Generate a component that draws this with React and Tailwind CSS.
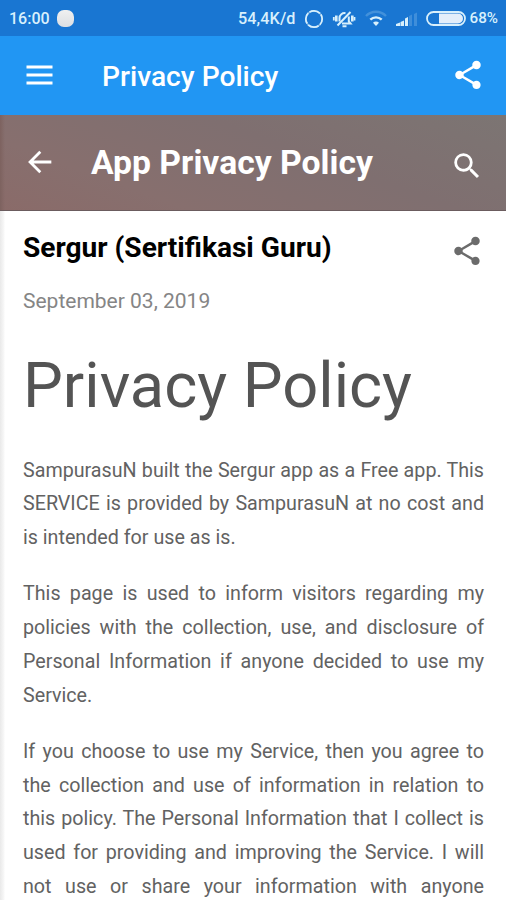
import { MdSearch, MdShare } from 'react-icons/md';

const paragraphs = [
  'SampurasuN built the Sergur app as a Free app. This SERVICE is provided by SampurasuN at no cost and is intended for use as is.',
  'This page is used to inform visitors regarding my policies with the collection, use, and disclosure of Personal Information if anyone decided to use my Service.',
];

const lastParagraph =
  'If you choose to use my Service, then you agree to the collection and use of information in relation to this policy. The Personal Information that I collect is used for providing and improving the Service. I will not use or share your information with anyone';

function StatusBar() {
  return (
    <div className="flex h-9 shrink-0 items-center bg-[#1976d2] pl-[9px] pr-2 pt-px text-[#d8f0fc]">
      <span className="w-[42px] whitespace-nowrap text-[16px] font-medium">16:00</span>
      <span className="ml-1.5 size-[17px] rounded-[7px] bg-linear-to-b from-[#f0f0f0] to-[#dcdfe3]" />
      <span className="ml-auto whitespace-nowrap pt-px text-[16.2px] font-medium tracking-[0.1px]">54,4K/d</span>
      <svg className="ml-2 h-5 w-5" viewBox="0 0 20 20" fill="none" stroke="currentColor" strokeWidth="1.7">
        <circle cx="10" cy="10" r="8.200" opacity=".5" />
        <circle cx="10" cy="10" r="8.200" strokeDasharray="11.3 1.580" strokeDashoffset="5" />
      </svg>
      <svg className="ml-2 h-5 w-6" viewBox="0 0 24 20" fill="none" stroke="currentColor" strokeWidth="2">
        <path d="M7.500 12.500V9a5 5 0 0 1 6-4.800M16.800 7.500v5l1.700 2H10" />
        <path d="M10.500 17.300h4M5.500 16.500L18.500 3" />
        <path d="M4.300 6.500v6M20.300 6.500v6" strokeWidth="2.600" />
        <path d="M1.800 8v3.500M22.500 8v3.500" strokeWidth="1.800" />
      </svg>
      <svg className="ml-2 h-5 w-6" viewBox="0 0 24 20" fill="none" stroke="currentColor" strokeWidth="2.4">
        <path d="M2 7a14 14 0 0 1 20 0" opacity=".22" />
        <path d="M6.300 10.600a8.300 8.300 0 0 1 11.400 0" />
        <path d="M12 17l-3-3.200a4.200 4.200 0 0 1 6 0z" fill="currentColor" stroke="none" />
      </svg>
      <svg className="ml-2 h-5 w-[22px]" viewBox="0 0 22 20" fill="currentColor">
        <path d="M0 17v-2l4-1.500V17zM4.500 17v-4l3.500-1.500V17zM9 17V9.500L12 8v9z" />
        <path d="M13 17V7l3-1.500V17zM18 17V5l3-1.500V17z" opacity=".2" />
      </svg>
      <svg className="ml-2 h-[15px] w-10" viewBox="0 0 40 15" fill="none">
        <rect x="1" y="1" width="38" height="13" rx="6.500" stroke="currentColor" strokeWidth="1.800" />
        <path d="M13 2.500h19a5 5 0 0 1 0 10H13z" fill="#e3eefa" />
      </svg>
      <span className="ml-1 whitespace-nowrap text-[15.2px] font-medium">68%</span>
    </div>
  );
}

function AppBar() {
  return (
    <header className="flex h-[79px] shrink-0 items-center bg-[#2196f3] pb-0.5 pl-[26px] pr-[21.5px] text-white">
      <svg className="h-5 w-[27px]" viewBox="0 0 27 20" fill="currentColor">
        <path d="M.5.500h26v3H.5zM.5 8.500h26v3H.5zM.5 16.500h26v3H.5z" />
      </svg>
      <h1 className="ml-[49px] whitespace-nowrap pt-1.5 text-[28.2px] font-medium">Privacy Policy</h1>
      <MdShare className="ml-auto size-[34px]" />
    </header>
  );
}

function BlogBar() {
  return (
    <div className="flex h-24 shrink-0 items-center border-b border-[#6b5c5e] bg-[linear-gradient(to_right,#7d625f_0,transparent_5px),linear-gradient(20deg,#8a6b69_0%,#876f6e_25%,#7f6f70_60%,#7c7573_100%)] pl-[23px] pr-[22px] text-white">
      <svg className="mb-0.5 size-[34px]" viewBox="0 0 24 24" fill="none" stroke="currentColor" strokeWidth="2">
        <path d="M20 12H5.400M12.200 4.800L5 12l7.200 7.200" />
      </svg>
      <h2 className="ml-[34px] whitespace-nowrap pt-px text-[33.7px] font-bold">App Privacy Policy</h2>
      <MdSearch className="ml-auto mt-1.5 size-[34px]" />
    </div>
  );
}

export default function App() {
  return (
    <div className="flex h-[900px] w-[506px] flex-col overflow-hidden bg-white font-['Roboto',sans-serif]">
      <StatusBar />
      <AppBar />
      <BlogBar />
      <main className="flex-1 overflow-hidden bg-[linear-gradient(to_right,#e9e9e9_0,#f8f8f8_4px,#fff_5px)] pl-[23px] pr-[22px]">
        <div className="flex h-[73px] items-center justify-between">
          <h3 className="whitespace-nowrap pt-0.5 text-[28.1px] font-bold text-black">Sergur (Sertifikasi Guru)</h3>
          <MdShare className="mt-1.5 size-[34px] text-[#6b6b6b]" />
        </div>
        <p className="h-8 pt-px text-[21px] leading-8 text-[#858585]">September 03, 2019</p>
        <h1 className="mt-[31px] whitespace-nowrap text-[63.2px] leading-[76px] text-[#545454]">Privacy Policy</h1>
        <div className="mt-[30.7px] text-justify text-[19.7px] leading-[33.75px] text-[#626262]">
          {paragraphs.map((text) => (
            <p key={text} className="mb-[22.5px]">{text}</p>
          ))}
          <p className="[text-align-last:justify]">{lastParagraph}</p>
        </div>
      </main>
    </div>
  );
}
